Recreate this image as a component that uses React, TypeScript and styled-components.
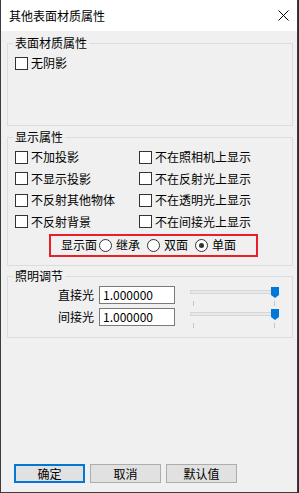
import styled, { createGlobalStyle } from 'styled-components';

const GlobalStyle = createGlobalStyle`
  html, body {
    margin: 0;
    padding: 0;
    background: #2b2b2b;
  }
  body {
    font-family: "Noto Sans CJK SC", "Microsoft YaHei", sans-serif;
    font-size: 12px;
    color: #000;
  }
`;

const Window = styled.div`
  box-sizing: border-box;
  width: 298px;
  height: 493px;
  display: flex;
  flex-direction: column;
  background: #f0f0f0;
  border: 1px solid #3c3c3c;
  border-top: none;
`;

const TitleBar = styled.div`
  height: 31px;
  flex: none;
  display: flex;
  align-items: center;
  justify-content: space-between;
  padding: 0 8px 0 8px;
  background: #fff;
  font-size: 12px;
  line-height: 14px;
`;

const Close = styled.svg`
  width: 11px;
  height: 11px;
  margin-top: -1px;
`;

const Body = styled.div`
  flex: 1;
  display: flex;
  flex-direction: column;
  padding: 5px 0 9px 6px;
`;

const Group = styled.fieldset<{ $gap?: number }>`
  box-sizing: border-box;
  width: 286px;
  margin: ${(p) => p.$gap ?? 0}px 0 0 0;
  padding: 0;
  min-inline-size: 0;
  border: 1px solid #dcdcdc;
`;

const Legend = styled.legend`
  margin-left: 5px;
  padding: 0 2px;
  font-size: 12px;
  line-height: 14px;
`;

const GroupInner = styled.div<{ $h: number }>`
  box-sizing: border-box;
  height: ${(p) => p.$h}px;
  padding: 6px 0 0 7px;
`;

const CheckGrid = styled.div`
  display: grid;
  grid-template-columns: 124px auto;
  grid-auto-rows: 14px;
  row-gap: 7.67px;
`;

const Check = styled.label`
  display: flex;
  align-items: center;
  gap: 3px;
  height: 14px;
  line-height: 14px;
  white-space: nowrap;
`;

const Box = styled.span`
  box-sizing: border-box;
  width: 13px;
  height: 13px;
  flex: none;
  background: #fff;
  border: 1px solid #333;
`;

const Highlight = styled.div`
  box-sizing: border-box;
  width: 209px;
  height: 23px;
  margin: 5px 0 0 34px;
  padding-left: 10px;
  display: flex;
  align-items: center;
  border: 2px solid #e8202a;
  line-height: 14px;
  white-space: nowrap;
`;

const Radio = styled.label<{ $gap: number }>`
  display: flex;
  align-items: center;
  gap: 4px;
  margin-left: ${(p) => p.$gap}px;
`;

const Dot = styled.span<{ $on?: boolean }>`
  box-sizing: border-box;
  width: 13px;
  height: 13px;
  border-radius: 50%;
  border: 1px solid #333;
  background: #fff;
  display: flex;
  align-items: center;
  justify-content: center;

  &::after {
    content: '';
    width: 5px;
    height: 5px;
    border-radius: 50%;
    background: ${(p) => (p.$on ? '#333' : 'transparent')};
  }
`;

const LightInner = styled.div`
  box-sizing: border-box;
  height: 54px;
  padding-top: 3px;
`;

const LightRow = styled.div`
  display: flex;
  align-items: flex-start;
  height: 22px;
`;

const LightLabel = styled.span`
  width: 86px;
  text-align: right;
  line-height: 18px;
  flex: none;
`;

const Input = styled.div`
  box-sizing: border-box;
  width: 76px;
  height: 18px;
  margin-left: 5px;
  padding-left: 3px;
  background: #fff;
  border: 1px solid #7a7a7a;
  line-height: 16px;
`;

const Slider = styled.div`
  position: relative;
  width: 88px;
  height: 22px;
  margin-left: 15px;
`;

const Track = styled.div`
  position: absolute;
  left: 0;
  top: 4px;
  box-sizing: border-box;
  width: 85px;
  height: 4px;
  background: #e7eaea;
  border: 1px solid #d6d6d6;
`;

const Thumb = styled.svg`
  position: absolute;
  left: 81px;
  top: 1px;
  width: 8px;
  height: 11px;
`;

const Tick = styled.span<{ $x: number }>`
  position: absolute;
  left: ${(p) => p.$x}px;
  top: 15px;
  width: 1px;
  height: 5px;
  background: #c4c4c4;
`;

const Buttons = styled.div`
  margin-top: auto;
  margin-left: 7px;
  display: flex;
  gap: 5px;
`;

const Button = styled.button<{ $primary?: boolean }>`
  box-sizing: border-box;
  width: 71px;
  height: 19px;
  padding: 0;
  font-family: inherit;
  font-size: 12px;
  line-height: 14px;
  color: #000;
  background: #e1e1e1;
  border: ${(p) => (p.$primary ? '2px solid #0078d7' : '1px solid #adadad')};
`;

const leftChecks = ['不加投影', '不显示投影', '不反射其他物体', '不反射背景'];
const rightChecks = ['不在照相机上显示', '不在反射光上显示', '不在透明光上显示', '不在间接光上显示'];

function LightSlider() {
  return (
    <Slider>
      <Track />
      <Thumb viewBox="0 0 8 11">
        <path d="M0 0H8V8L4 11L0 8Z" fill="#0078d7" />
      </Thumb>
      <Tick $x={3} />
      <Tick $x={84} />
    </Slider>
  );
}

export default function App() {
  const checks = leftChecks.flatMap((l, i) => [l, rightChecks[i]]);
  return (
    <>
      <GlobalStyle />
      <Window>
        <TitleBar>
          <span>其他表面材质属性</span>
          <Close viewBox="0 0 11 11">
            <path d="M0.5 0.5L10.5 10.5M10.5 0.5L0.5 10.5" stroke="#000" strokeWidth="1" />
          </Close>
        </TitleBar>
        <Body>
          <Group>
            <Legend>表面材质属性</Legend>
            <GroupInner $h={75}>
              <Check>
                <Box />
                无阴影
              </Check>
            </GroupInner>
          </Group>

          <Group $gap={4}>
            <Legend>显示属性</Legend>
            <GroupInner $h={121}>
              <CheckGrid>
                {checks.map((c) => (
                  <Check key={c}>
                    <Box />
                    {c}
                  </Check>
                ))}
              </CheckGrid>
              <Highlight>
                显示面
                <Radio $gap={2}>
                  <Dot />
                  继承
                </Radio>
                <Radio $gap={7}>
                  <Dot />
                  双面
                </Radio>
                <Radio $gap={7}>
                  <Dot $on />
                  单面
                </Radio>
              </Highlight>
            </GroupInner>
          </Group>

          <Group $gap={3}>
            <Legend>照明调节</Legend>
            <LightInner>
              <LightRow>
                <LightLabel>直接光</LightLabel>
                <Input>1.000000</Input>
                <LightSlider />
              </LightRow>
              <LightRow>
                <LightLabel>间接光</LightLabel>
                <Input>1.000000</Input>
                <LightSlider />
              </LightRow>
            </LightInner>
          </Group>

          <Buttons>
            <Button $primary>确定</Button>
            <Button>取消</Button>
            <Button>默认值</Button>
          </Buttons>
        </Body>
      </Window>
    </>
  );
}
